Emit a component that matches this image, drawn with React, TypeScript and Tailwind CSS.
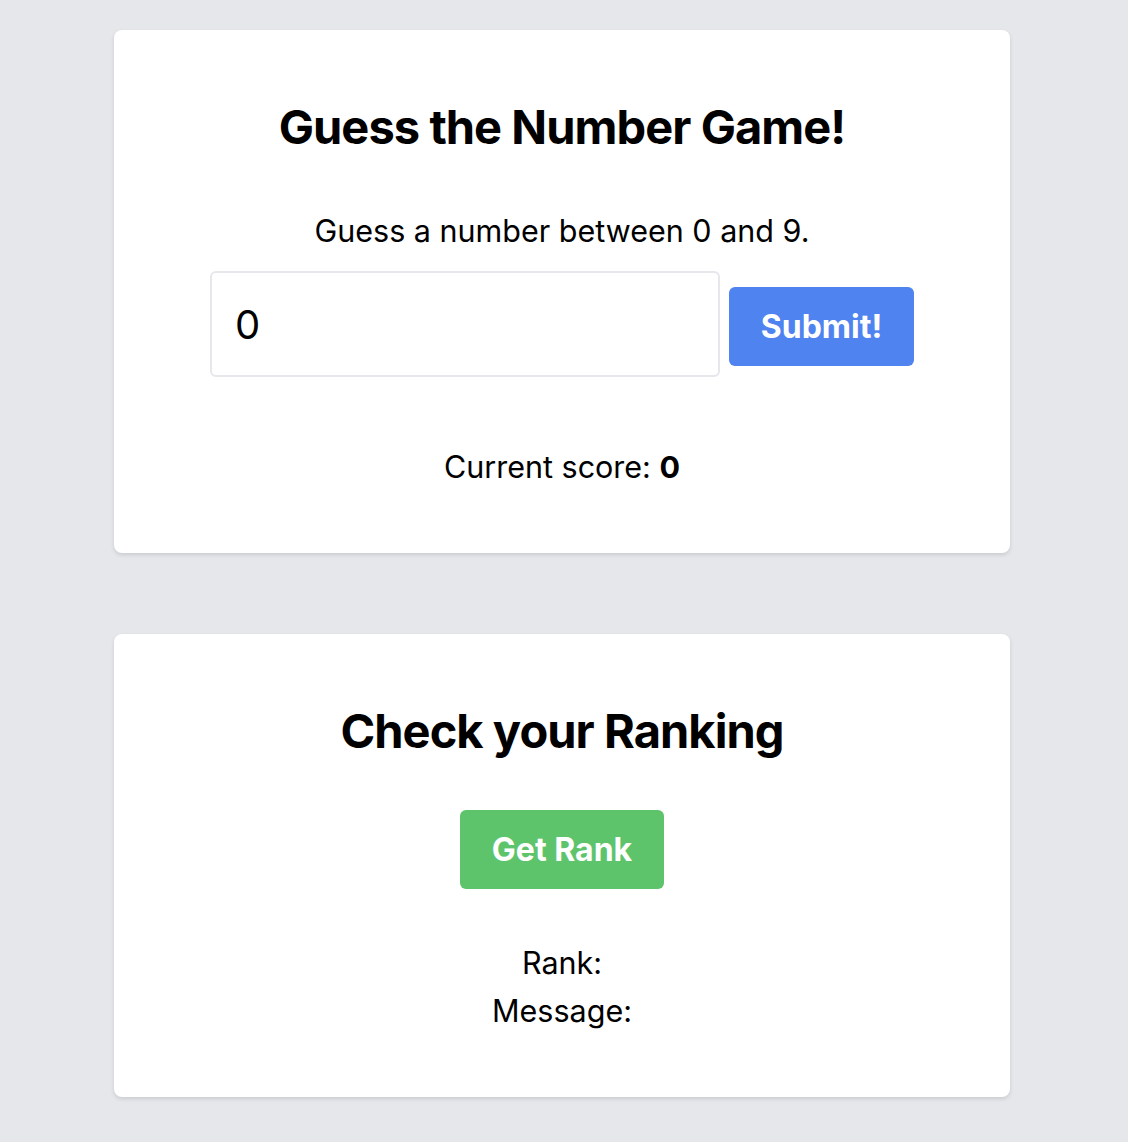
import { useState } from "react";

export default function App() {
  const [guess, setGuess] = useState("0");
  const [score] = useState(0);

  return (
    <div
      className="min-h-screen bg-[#e5e7eb] pt-[30px] pr-[4px] pb-[45px]"
      style={{ fontFamily: "Inter, 'Noto Sans', sans-serif" }}
    >
      <div className="mx-auto flex w-[896px] flex-col gap-[81px]">
        <section className="flex flex-col items-center rounded-lg bg-white pt-[67px] pb-[62px] text-black shadow-[0_2px_4px_rgba(0,0,0,0.12)]">
          <h1 className="text-[47px] font-bold leading-[60px] tracking-[-0.02em]">
            Guess the Number Game!
          </h1>
          <p className="mt-[50px] text-[30.5px] leading-[48px]">
            Guess a number between 0 and 9.
          </p>
          <div className="mt-[16px] flex items-center gap-[9px]">
            <input
              value={guess}
              onChange={(e) => setGuess(e.target.value)}
              className="h-[106px] w-[510px] rounded-md border-2 border-[#e5e7eb] px-[23px] text-[40px] outline-none"
            />
            <button className="mt-[5px] h-[79px] w-[185px] rounded-md bg-[#4f83ef] text-[32px] font-bold text-white">
              Submit!
            </button>
          </div>
          <p className="mt-[66px] text-[30.5px] leading-[48px]">
            Current score: <span className="font-bold">{score}</span>
          </p>
        </section>

        <section className="flex flex-col items-center rounded-lg bg-white pt-[67px] pb-[62px] text-black shadow-[0_2px_4px_rgba(0,0,0,0.12)]">
          <h2 className="text-[47px] font-bold leading-[60px] tracking-[-0.02em]">
            Check your Ranking
          </h2>
          <button className="mt-[49px] h-[79px] w-[204px] rounded-md bg-[#5ec46c] text-[32px] font-bold text-white">
            Get Rank
          </button>
          <div className="mt-[50px] flex flex-col items-center text-[30.5px] leading-[48px]">
            <p>Rank: </p>
            <p>Message: </p>
          </div>
        </section>
      </div>
    </div>
  );
}
